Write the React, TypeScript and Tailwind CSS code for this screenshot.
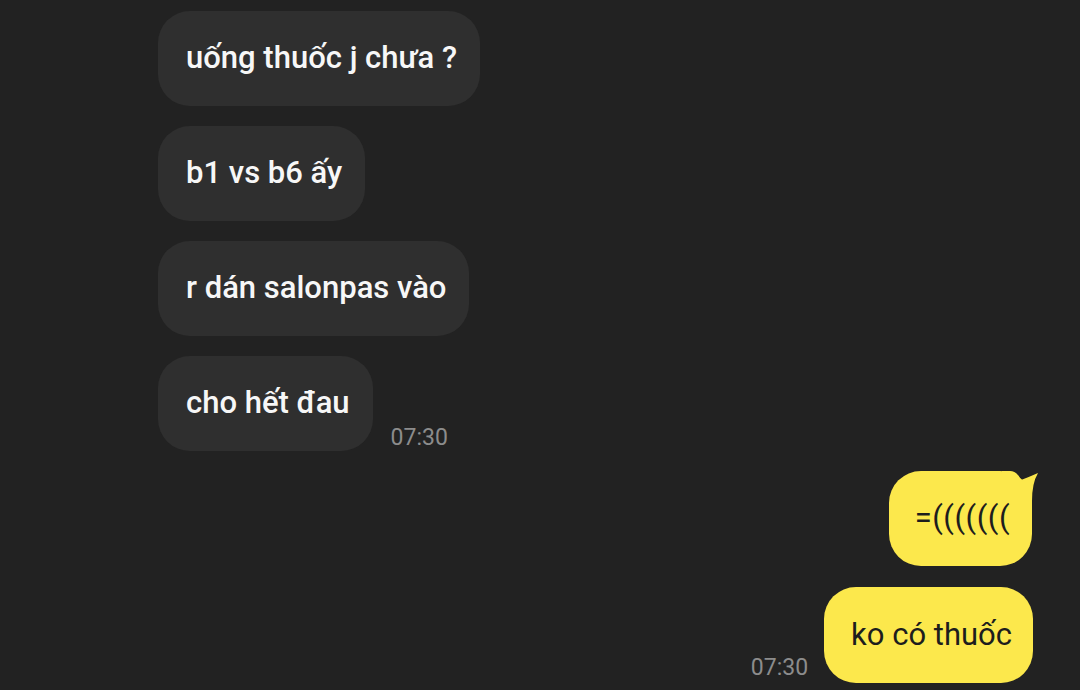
const font = { fontFamily: "Roboto, 'Noto Sans', sans-serif" }

function Incoming({ text, time }: { text: string; time?: string }) {
  return (
    <div className="flex items-end">
      <div className="flex h-[95px] items-center rounded-[32px] bg-[#2f2f2f] pl-[28px] pr-[23px] text-[31px] font-medium text-[#f7f7f7]">
        {text}
      </div>
      {time && <span className="mb-[-4px] ml-[18px] text-[23px] text-[#8c8c8c]">{time}</span>}
    </div>
  )
}

export default function App() {
  return (
    <div style={font} className="flex h-[690px] w-[1080px] flex-col overflow-hidden bg-[#222222]">
      <div className="flex flex-col gap-[20px] pl-[158px] pt-[11px]">
        <Incoming text="uống thuốc j chưa ?" />
        <Incoming text="b1 vs b6 ấy" />
        <Incoming text="r dán salonpas vào" />
        <Incoming text="cho hết đau" time="07:30" />
      </div>

      <div className="mt-[20px] flex flex-col items-end gap-[21px] pr-[47px]">
        <div className="relative mr-[1px] flex h-[95px] items-center rounded-[32px] bg-[#fce84c] pl-[26px] pr-[22px] text-[31px] tracking-[0.5px] text-[#1d1d1d]">
          <svg className="absolute right-[-8px] top-0" width="38" height="40" viewBox="0 0 38 40">
            <path d="M0 0 L8 0 Q15 0 19 9 Q27 6 36 2 Q30 12 30 30 L30 40 L0 40 Z" fill="#fce84c" />
          </svg>
          <span className="relative">=(((((((</span>
        </div>
        <div className="flex items-end">
          <span className="mb-[-2px] mr-[16px] text-[23px] text-[#8c8c8c]">07:30</span>
          <div className="flex h-[96px] items-center rounded-[32px] bg-[#fce84c] pl-[27px] pr-[21px] text-[31px] text-[#1d1d1d]">
            ko có thuốc
          </div>
        </div>
      </div>
    </div>
  )
}
